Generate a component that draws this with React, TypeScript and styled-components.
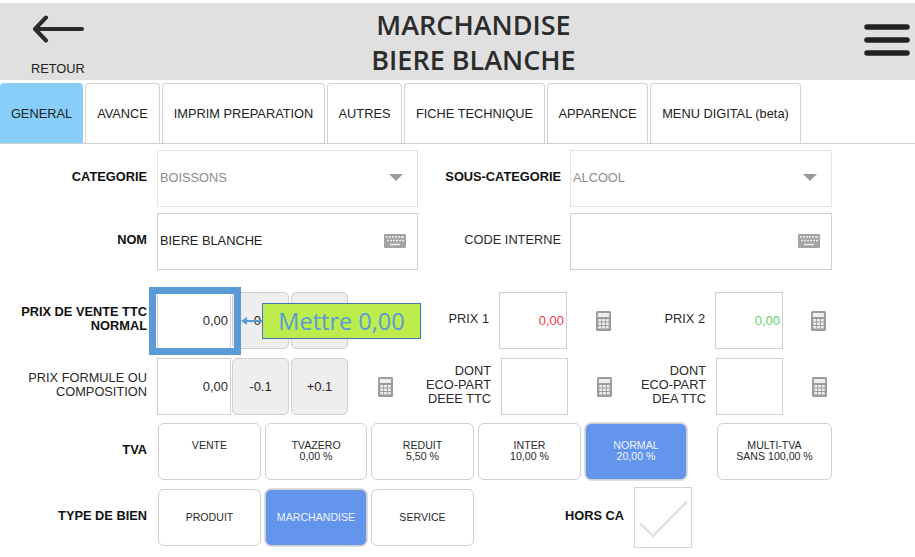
import React from 'react';
import styled, { createGlobalStyle } from 'styled-components';

const GlobalStyle = createGlobalStyle`
	html, body {
		margin: 0;
		padding: 0;
		background: #fff;
		font-family: 'Liberation Sans', Arial, sans-serif;
		color: #222;
	}
	* {
		box-sizing: border-box;
	}
`;

const Page = styled.div`
	width: 915px;
	height: 557px;
	overflow: hidden;
	padding-top: 3px;
`;

const Header = styled.header`
	display: flex;
	height: 77px;
	background: #e0e0e0;
`;

const BackButton = styled.div`
	width: 117px;
	display: flex;
	flex-direction: column;
	padding: 12px 0 0 31px;
	font-size: 12.8px;
	color: #222;
`;

const BackLabel = styled.span`
	margin-top: 18px;
	line-height: 15px;
`;

const Title = styled.h1`
	flex: 1;
	margin: 0;
	padding-top: 4px;
	text-align: center;
	font-family: 'Open Sans', sans-serif;
	font-weight: 600;
	font-size: 27px;
	line-height: 35px;
	color: #2c2c2c;
`;

const MenuButton = styled.div`
	width: 85px;
	display: flex;
	justify-content: flex-end;
	padding: 20px 5px 0 0;
`;

const Tabs = styled.nav`
	display: flex;
	gap: 2px;
	height: 61px;
	margin-top: 3px;
	border-bottom: 1px solid #d0d0d0;
`;

const Tab = styled.div<{ $w: number; $active?: boolean }>`
	width: ${p => p.$w}px;
	display: flex;
	align-items: center;
	justify-content: center;
	font-size: 12.8px;
	color: #222;
	background: ${p => (p.$active ? '#87cefa' : '#fff')};
	border: 1px solid ${p => (p.$active ? '#87cefa' : '#d4d4d4')};
	border-bottom: none;
	border-radius: 4px 4px 0 0;
`;

const Row = styled.div<{ $top: number }>`
	position: relative;
	display: flex;
	align-items: center;
	height: 57px;
	margin-top: ${p => p.$top}px;
`;

const Label = styled.div<{ $w: number; $gap?: number; $bold?: boolean }>`
	width: ${p => p.$w}px;
	margin-right: ${p => p.$gap ?? 10}px;
	padding-bottom: 4px;
	text-align: right;
	font-size: 12.8px;
	line-height: 14px;
	font-weight: ${p => (p.$bold ? 700 : 400)};
	color: ${p => (p.$bold ? '#111' : '#2a2a2a')};
`;

const Field = styled.div<{ $w: number; $muted?: boolean }>`
	width: ${p => p.$w}px;
	height: 57px;
	display: flex;
	align-items: center;
	justify-content: space-between;
	padding: 0 11px 2px 2px;
	font-size: 12.8px;
	color: ${p => (p.$muted ? '#8c8c8c' : '#222')};
	border: 1px solid ${p => (p.$muted ? '#e2e2e2' : '#cfcfd4')};
	background: #fff;
`;

const Caret = styled.span`
	width: 0;
	height: 0;
	margin-right: 3px;
	border-left: 7px solid transparent;
	border-right: 7px solid transparent;
	border-top: 7px solid #9a9a9a;
`;

const Amount = styled.div<{ $w: number; $color?: string }>`
	width: ${p => p.$w}px;
	height: 57px;
	display: flex;
	align-items: center;
	justify-content: flex-end;
	padding-right: 2px;
	font-size: 13px;
	color: ${p => p.$color ?? '#2a2a2a'};
	border: 1px solid #cfcfd4;
	background: #fff;
`;

const Step = styled.div<{ $ml?: number }>`
	width: 57px;
	height: 57px;
	margin-left: ${p => p.$ml ?? 1}px;
	display: flex;
	align-items: center;
	justify-content: center;
	font-size: 13px;
	color: #222;
	background: #eee;
	border: 1px solid #cfcfcf;
	border-radius: 5px;
`;

const CalcSlot = styled.div<{ $ml: number }>`
	display: flex;
	margin-left: ${p => p.$ml}px;
`;

const Choice = styled.div<{ $w?: number; $ml?: number; $on?: boolean; $center?: boolean }>`
	width: ${p => p.$w ?? 103}px;
	height: 57px;
	margin-left: ${p => p.$ml ?? 4}px;
	display: flex;
	flex-direction: column;
	align-items: center;
	justify-content: ${p => (p.$center ? 'center' : 'flex-start')};
	padding-top: ${p => (p.$center ? 0 : 16)}px;
	font-size: 10.6px;
	line-height: 11px;
	text-align: center;
	color: ${p => (p.$on ? '#eef3ff' : '#2a2a2a')};
	background: ${p => (p.$on ? '#6495ed' : '#fff')};
	border: 1px solid #cfcfcf;
	border-radius: 6px;
	${p => p.$on && 'outline: 1px solid #dedede;'}
`;

const Check = styled.div`
	width: 58px;
	height: 61px;
	flex-shrink: 0;
	display: flex;
	align-items: center;
	justify-content: center;
	border: 1px solid #d4d4d4;
	background: #fff;
`;

const Highlight = styled.div`
	position: absolute;
	left: 149px;
	top: -5px;
	width: 92px;
	height: 68px;
	border: 7px solid #5b9bd5;
	z-index: 2;
`;

const PointerLine = styled.svg`
	position: absolute;
	left: 241px;
	top: 23px;
	z-index: 2;
`;

const Callout = styled.div`
	position: absolute;
	left: 262px;
	top: 11px;
	width: 159px;
	height: 36px;
	display: flex;
	align-items: center;
	justify-content: center;
	font-family: 'Open Sans', sans-serif;
	font-size: 23.5px;
	color: #5b9bd5;
	background: #bded4c;
	border: 1px solid #4472c4;
	z-index: 3;
`;

const BackArrow = () => (
	<svg width="54" height="28" viewBox="0 0 54 28">
		<path
			d="M51 14H5M15 2.500L4 14l11 11.500"
			fill="none"
			stroke="#2b2b2b"
			strokeWidth="4"
			strokeLinecap="round"
			strokeLinejoin="round"
		/>
	</svg>
);

const Burger = () => (
	<svg width="46" height="34" viewBox="0 0 46 34">
		<path
			d="M3 4h40M3 17h40M3 30h40"
			stroke="#222"
			strokeWidth="5.500"
			strokeLinecap="round"
		/>
	</svg>
);

const Keyboard = () => (
	<svg width="22" height="14" viewBox="0 0 22 14">
		<rect width="22" height="14" rx="1" fill="#a3a3a3" />
		<path
			d="M2 3h2M5 3h2M8 3h2M11 3h2M14 3h2M17 3h3M3 6.500h2M6 6.500h2M9 6.500h2M12 6.500h2M15 6.500h2M18 6.500h2M6 10.500h10"
			stroke="#efefef"
			strokeWidth="1.600"
		/>
	</svg>
);

const Calc = () => (
	<svg width="15" height="20" viewBox="0 0 16 20" preserveAspectRatio="none">
		<rect width="16" height="20" rx="1.500" fill="#9c9c9c" />
		<rect x="2" y="2" width="12" height="4" fill="#eee" />
		<path
			d="M2.500 8h3v2.500h-3zM6.500 8h3v2.500h-3zM10.500 8h3v2.500h-3zM2.500 11.500h3V14h-3zM6.500 11.500h3V14h-3zM10.500 11.500h3V14h-3zM2.500 15h3v2.500h-3zM6.500 15h3v2.500h-3zM10.500 15h3v2.500h-3z"
			fill="#eee"
		/>
	</svg>
);

const TABS = [
	{ label: 'GENERAL', w: 83 },
	{ label: 'AVANCE', w: 75 },
	{ label: 'IMPRIM PREPARATION', w: 163 },
	{ label: 'AUTRES', w: 75 },
	{ label: 'FICHE TECHNIQUE', w: 141 },
	{ label: 'APPARENCE', w: 101 },
	{ label: 'MENU DIGITAL (beta)', w: 151 },
];

export default function App() {
	return (
		<Page>
			<GlobalStyle />
			<Header>
				<BackButton>
					<BackArrow />
					<BackLabel>RETOUR</BackLabel>
				</BackButton>
				<Title>
					MARCHANDISE
					<br />
					BIERE BLANCHE
				</Title>
				<MenuButton>
					<Burger />
				</MenuButton>
			</Header>

			<Tabs>
				{TABS.map((t, i) => (
					<Tab key={t.label} $w={t.w} $active={i === 0}>
						{t.label}
					</Tab>
				))}
			</Tabs>

			<Row $top={6}>
				<Label $w={147} $bold>CATEGORIE</Label>
				<Field $w={261} $muted>
					BOISSONS
					<Caret />
				</Field>
				<Label $w={143} $gap={9} $bold>SOUS-CATEGORIE</Label>
				<Field $w={262} $muted>
					ALCOOL
					<Caret />
				</Field>
			</Row>

			<Row $top={6}>
				<Label $w={147} $bold>NOM</Label>
				<Field $w={261}>
					BIERE BLANCHE
					<Keyboard />
				</Field>
				<Label $w={143} $gap={9}>CODE INTERNE</Label>
				<Field $w={262}>
					<span />
					<Keyboard />
				</Field>
			</Row>

			<Row $top={22}>
				<Label $w={147} $bold>PRIX DE VENTE TTC<br />NORMAL</Label>
				<Amount $w={74}>0,00</Amount>
				<Step>-0.1</Step>
				<Step $ml={2}>+0.1</Step>
				<Label $w={141} $gap={10}>PRIX 1</Label>
				<Amount $w={68} $color="#f5333f">0,00</Amount>
				<CalcSlot $ml={29}><Calc /></CalcSlot>
				<Label $w={94} $gap={10}>PRIX 2</Label>
				<Amount $w={68} $color="#5fd35f">0,00</Amount>
				<CalcSlot $ml={28}><Calc /></CalcSlot>
				<Highlight />
				<PointerLine width="22" height="12" viewBox="0 0 22 12">
					<path d="M22 6H2" stroke="#5b9bd5" strokeWidth="2" />
					<path d="M0 6l6-4v8z" fill="#5b9bd5" />
				</PointerLine>
				<Callout>Mettre 0,00</Callout>
			</Row>

			<Row $top={9}>
				<Label $w={147}>PRIX FORMULE OU<br />COMPOSITION</Label>
				<Amount $w={74}>0,00</Amount>
				<Step>-0.1</Step>
				<Step $ml={2}>+0.1</Step>
				<CalcSlot $ml={30}><Calc /></CalcSlot>
				<Label $w={98} $gap={10}>DONT<br />ECO-PART<br />DEEE TTC</Label>
				<Amount $w={67} />
				<CalcSlot $ml={29}><Calc /></CalcSlot>
				<Label $w={94} $gap={10}>DONT<br />ECO-PART<br />DEA TTC</Label>
				<Amount $w={67} />
				<CalcSlot $ml={29}><Calc /></CalcSlot>
			</Row>

			<Row $top={8}>
				<Label $w={147} $gap={7} $bold>TVA</Label>
				<Choice>VENTE</Choice>
				<Choice $w={102}>TVAZERO<span>0,00 %</span></Choice>
				<Choice>REDUIT<span>5,50 %</span></Choice>
				<Choice>INTER<span>10,00 %</span></Choice>
				<Choice $w={102} $on>NORMAL<span>20,00 %</span></Choice>
				<Choice $w={115} $ml={30}>MULTI-TVA<span>SANS 100,00 %</span></Choice>
			</Row>

			<Row $top={9}>
				<Label $w={147} $gap={7} $bold>TYPE DE BIEN</Label>
				<Choice $center>PRODUIT</Choice>
				<Choice $w={102} $center $on>MARCHANDISE</Choice>
				<Choice $center>SERVICE</Choice>
				<Label $w={150} $bold>HORS CA</Label>
				<Check>
					<svg width="52" height="40" viewBox="0 0 52 40">
						<path
							d="M3 25.500L16 38 50 3.500"
							fill="none"
							stroke="#e2e2e2"
							strokeWidth="2.500"
						/>
					</svg>
				</Check>
			</Row>
		</Page>
	);
}
